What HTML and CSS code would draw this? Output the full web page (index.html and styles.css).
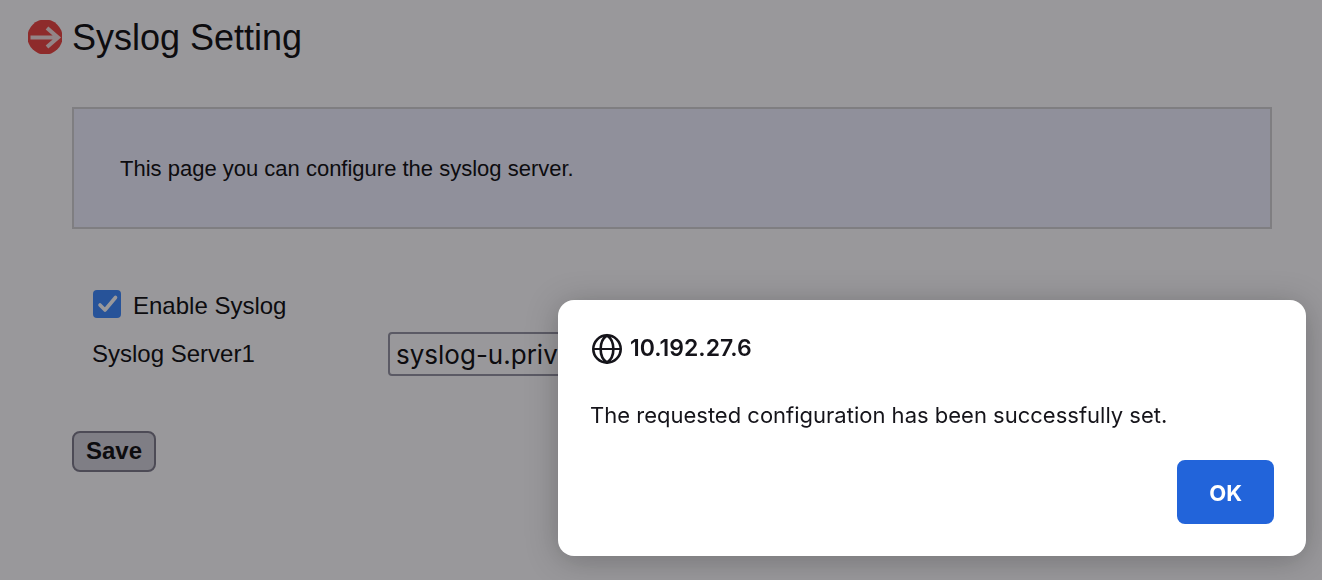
FILE: index.html
```html
<!DOCTYPE html>
<html lang="en">
<head>
    <meta charset="UTF-8">
    <meta name="viewport" content="width=device-width, initial-scale=1.0">
    <title>Syslog Setting</title>
    <link rel="stylesheet" href="styles.css">
</head>
<body>
    <main class="page">
        <header class="page-header">
            <svg class="title-icon" viewBox="0 0 34 34" aria-hidden="true">
                <circle cx="17" cy="17" r="17.5" fill="#ec3a33"/>
                <path d="M2.500 17.500H30M19 8L30 17.500L19 27" fill="none" stroke="#f4dcda" stroke-width="4"/>
            </svg>
            <h1>Syslog Setting</h1>
        </header>

        <p class="intro">This page you can configure the syslog server.</p>

        <form class="syslog-form">
            <div class="check-row">
                <input type="checkbox" id="enableSyslog" checked>
                <label for="enableSyslog">Enable Syslog</label>
            </div>
            <div class="server-row">
                <label for="server1">Syslog Server1</label>
                <input type="text" id="server1" value="syslog-u.priv">
            </div>
            <button type="button" class="save-button">Save</button>
        </form>
    </main>

    <div class="overlay">
        <section class="dialog" role="alertdialog" aria-modal="true" aria-labelledby="dialogHost" aria-describedby="dialogText">
            <div class="dialog-header">
                <svg class="globe-icon" viewBox="0 0 32 32" fill="none" stroke="#15141a" stroke-width="2.6" aria-hidden="true">
                    <circle cx="17" cy="17" r="13.7"/>
                    <path d="M17 3.300C8.500 9 8.500 25 17 30.700C25.500 25 25.500 9 17 3.300Z"/>
                    <path d="M3 17H31" stroke-width="2"/>
                </svg>
                <h2 id="dialogHost">10.192.27.6</h2>
            </div>
            <p id="dialogText">The requested configuration has been successfully set.</p>
            <button type="button" class="ok-button">OK</button>
        </section>
    </div>
</body>
</html>
```
FILE: styles.css
```css
* {
    margin: 0;
    padding: 0;
    box-sizing: border-box;
}

body {
    background: #fff;
    color: #000;
    font-family: "Liberation Sans", Arial, sans-serif;
    font-size: 24px;
}

.page {
    padding: 16px 50px 16px 28px;
}

.page-header {
    display: flex;
    align-items: center;
    gap: 10px;
}

.title-icon {
    width: 34px;
    height: 34px;
}

h1 {
    padding-top: 2px;
    font-size: 36px;
    font-weight: 400;
    line-height: 40px;
}

.intro {
    margin: 49px 0 60px 44px;
    padding: 45px 46px 43px;
    border: 2px solid #d0d0d0;
    background: #eef1ff;
    font-size: 22px;
    line-height: 30px;
}

.syslog-form {
    margin-left: 44px;
}

.check-row {
    display: flex;
    align-items: flex-start;
    gap: 12px;
    height: 32px;
    padding: 1px 0 0 21px;
    line-height: 32px;
}

.check-row input {
    appearance: none;
    width: 28px;
    height: 28px;
    border-radius: 4px;
    background: #3182fb url("data:image/svg+xml,%3Csvg xmlns='http://www.w3.org/2000/svg' viewBox='0 0 28 28'%3E%3Cpath d='M7 15l5 5L22.500 7.500' fill='none' stroke='white' stroke-width='3.6' stroke-linecap='round' stroke-linejoin='round'/%3E%3C/svg%3E") center / contain;
}

.server-row {
    display: flex;
    align-items: center;
    margin: 11px 0 55px;
    padding-left: 20px;
}

.server-row label {
    width: 296px;
}

.server-row input {
    width: 400px;
    height: 44px;
    padding: 0 6px;
    border: 2px solid #8f8f9d;
    border-radius: 4px;
    background: #fff;
    font-family: Inter, sans-serif;
    font-size: 26px;
}

.save-button {
    height: 41px;
    padding: 0 12px 2px;
    border: 2px solid #757382;
    border-radius: 8px;
    background: #d0d0d7;
    font-family: inherit;
    font-size: 24px;
    font-weight: 700;
}

.overlay {
    position: fixed;
    inset: 0;
    display: flex;
    justify-content: flex-end;
    align-items: flex-end;
    padding: 24px 16px;
    background: rgba(28, 27, 34, 0.45);
}

.dialog {
    display: flex;
    flex-direction: column;
    width: 748px;
    max-width: 100%;
    padding: 32px;
    border-radius: 16px;
    background: #fff;
    box-shadow: 0 4px 32px rgba(0, 0, 0, 0.25);
    color: #15141a;
    font-family: Inter, sans-serif;
    font-size: 22px;
    line-height: 32px;
}

.dialog-header {
    display: flex;
    align-items: center;
    gap: 8px;
    margin-bottom: 35px;
}

.globe-icon {
    width: 32px;
    height: 32px;
}

h2 {
    font-size: 23px;
    font-weight: 600;
}

.ok-button {
    align-self: flex-end;
    height: 64px;
    margin-top: 29px;
    padding: 2px 32px 0;
    border: none;
    border-radius: 8px;
    background: #2264da;
    color: #fff;
    font-family: inherit;
    font-size: 22px;
    font-weight: 700;
}
```
